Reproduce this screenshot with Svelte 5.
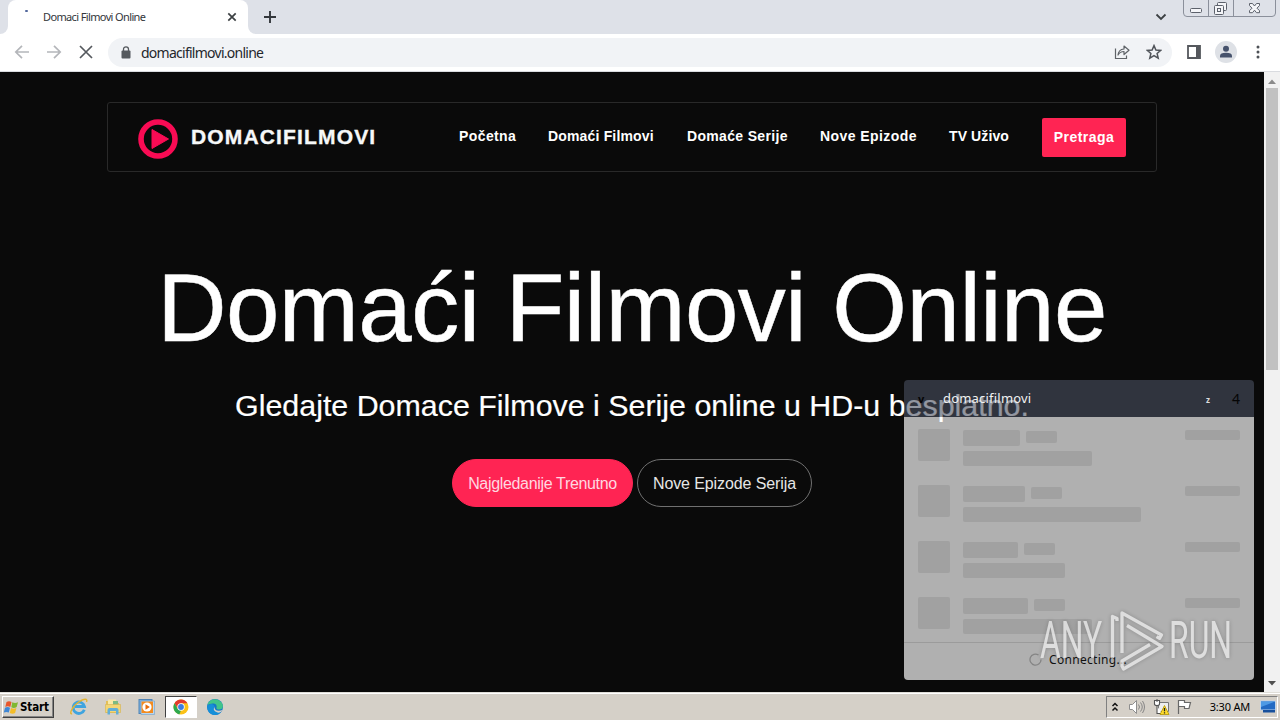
<script>
  const links = [
    { label: 'Početna', w: 57, ls: 0.4 },
    { label: 'Domaći Filmovi', w: 107, ls: 0.17 },
    { label: 'Domaće Serije', w: 101, ls: 0.33 },
    { label: 'Nove Epizode', w: 97, ls: 0.43 },
    { label: 'TV Uživo', w: 61, ls: 0.1 }
  ];
  const rows = [
    { a: 57, b: 31, c: 129 },
    { a: 62, b: 31, c: 178 },
    { a: 55, b: 31, c: 102 },
    { a: 65, b: 31, c: 129 }
  ];
</script>

<div class="screen">
  <header class="tabs">
    <div class="edge"></div>
    <div class="tab">
      <span class="spin"></span>
      <span class="title">Domaci Filmovi Online</span>
      <svg width="10" height="10" viewBox="0 0 10 10"><path d="M1.3 1.3l7.4 7.4M8.7 1.3L1.3 8.7" stroke="#3c4043" stroke-width="1.7" /></svg>
    </div>
    <div class="edge right"></div>
    <svg class="plus" width="14" height="14" viewBox="0 0 14 14"><path d="M7 1v12M1 7h12" stroke="#33373c" stroke-width="1.9" /></svg>
    <svg class="chev" width="12" height="8" viewBox="0 0 12 8"><path d="M1.5 1.5L6 6l4.500-4.500" fill="none" stroke="#3c4043" stroke-width="1.8" /></svg>
    <svg class="winctl" width="94" height="18" viewBox="0 0 94 18">
      <path d="M.5 0v13q0 3.500 3.500 3.500h85q3.500 0 3.500-3.500V0M25.500 0v16M50.500 0v16" fill="none" stroke="#8b909b" />
      <g fill="#f4f5f8" stroke="#5c616b">
        <rect x="7.500" y="8.500" width="11" height="4" rx="1" />
        <rect x="34.500" y="2.500" width="9" height="8" rx="1" />
        <rect x="31.500" y="5.500" width="9" height="9" rx="1" />
        <rect x="34.500" y="8.500" width="3" height="3" />
        <path d="M66.500 3.500h3l2 2.500 2-2.500h3v2L74 8.200l2.500 2.500v2h-3l-2-2.500-2 2.500h-3v-2L69 8.200l-2.500-2.700z" />
      </g>
    </svg>
  </header>

  <div class="toolbar">
    <svg width="16" height="16" viewBox="0 0 16 16"><path d="M15 8H2M8 1.800L1.800 8 8 14.200" fill="none" stroke="#b4b6ba" stroke-width="1.700" /></svg>
    <svg width="16" height="16" viewBox="0 0 16 16"><path d="M1 8h13M8 1.800L14.200 8 8 14.200" fill="none" stroke="#b4b6ba" stroke-width="1.700" /></svg>
    <svg width="16" height="16" viewBox="0 0 16 16"><path d="M2 2l12 12M14 2L2 14" stroke="#55595e" stroke-width="1.700" /></svg>
    <div class="omni">
      <svg width="10" height="13" viewBox="0 0 10 13"><rect x=".5" y="4.500" width="9" height="8" rx="1" fill="#55595e" /><path d="M2.500 5V3.300a2.500 2.500 0 0 1 5 0V5" fill="none" stroke="#55595e" stroke-width="1.300" /></svg>
      <span class="url">domacifilmovi.online</span>
      <svg class="share" width="16" height="16" viewBox="0 0 16 16"><path d="M1.500 4.500v10h11v-3" fill="none" stroke="#5f6368" stroke-width="1.200" /><path d="M4 11q.5-5.500 6-6V2l5 4.200-5 4.300v-3Q6 7.500 4 11z" fill="none" stroke="#5f6368" stroke-width="1.200" stroke-linejoin="round" /></svg>
      <svg width="16" height="16" viewBox="0 0 16 16"><path d="M8 1.600l1.900 4.400 4.800.4-3.600 3.100 1.100 4.700L8 11.700l-4.200 2.500 1.100-4.700L1.300 6.400l4.800-.4z" fill="none" stroke="#50545a" stroke-width="1.500" /></svg>
    </div>
    <svg class="side" width="14" height="14" viewBox="0 0 14 14"><path d="M1 1h12v12H1z" fill="#fff" stroke="#55585d" stroke-width="1.800" /><path d="M9 1h4v12H9z" fill="#55585d" /></svg>
    <svg class="avatar" width="22" height="22" viewBox="0 0 22 22"><circle cx="11" cy="11" r="11" fill="#dee1e6" /><circle cx="11" cy="7.800" r="3" fill="#46526c" /><path d="M5 16.500v-1.700q0-3 6-3t6 3v1.700z" fill="#46526c" /></svg>
    <svg class="dots" width="4" height="14" viewBox="0 0 4 14" fill="#4d5156"><circle cx="2" cy="2" r="1.500" /><circle cx="2" cy="7" r="1.500" /><circle cx="2" cy="12" r="1.500" /></svg>
  </div>

  <div class="view">
    <main>
      <nav>
        <svg class="logo" width="42" height="42" viewBox="0 0 42 42"><circle cx="21" cy="21" r="17" fill="none" stroke="#f90b54" stroke-width="5.600" /><path d="M15 11.500v19L31.500 21z" fill="#f90b54" stroke="#f90b54" stroke-linejoin="round" /></svg>
        <span class="brand">DOMACIFILMOVI</span>
        <div class="links">
          {#each links as l}<span class="link" style="width:{l.w}px;letter-spacing:{l.ls}px">{l.label}</span>{/each}
        </div>
        <span class="search">Pretraga</span>
      </nav>
      <h1>Domaći Filmovi Online</h1>
      <h2>Gledajte Domace Filmove i Serije online u HD-u besplatno.</h2>
      <div class="cta">
        <span class="btn hot">Najgledanije Trenutno</span>
        <span class="btn line">Nove Epizode Serija</span>
      </div>
    </main>
    <div class="scroll">
      <svg width="8" height="5" viewBox="0 0 8 5"><path d="M0 5l4-4.500L8 5z" fill="#8a8a8a" /></svg>
      <div class="thumb"></div>
      <svg class="down" width="8" height="5" viewBox="0 0 8 5"><path d="M0 0l4 4.500L8 0z" fill="#505050" /></svg>
    </div>
  </div>

  <footer>
    <div class="start">
      <svg width="17" height="15" viewBox="0 0 17 15"><path d="M3.500 2q2.500-1.500 5 0L7.300 7q-2.500-1.400-5 0z" fill="#e8562a" /><path d="M9.300 2.300q2.700 1.500 5.700 0L13.700 7q-2.700 1.700-5.400.3z" fill="#80b832" /><path d="M2 7.800q2.500-1.400 5 0L5.800 12.600q-2.300-1.300-5 0z" fill="#3f87d5" /><path d="M8 8.100q2.700 1.400 5.400 0l-1.300 4.800q-2.500 1.500-5.300 0z" fill="#f4bd28" /></svg>
      <span>Start</span>
    </div>
    <div class="quick">
      <svg width="18" height="18" viewBox="0 0 18 18"><path d="M14.300 11.700A5.700 5.700 0 1 1 14.500 8.500H5" fill="none" stroke="#3fa4df" stroke-width="2.800" /><path d="M2 15.500C-1 17 1.500 9 8 4.500S18 .5 16.500 4" fill="none" stroke="#e3b431" stroke-width="1.400" /></svg>
      <svg width="18" height="18" viewBox="0 0 18 18"><path d="M2 3h5l1 2h7v10H2z" fill="#e3bf58" /><path d="M4 1.500h8V8H4z" fill="#f9e9a6" /><path d="M9 3h5v4H9z" fill="#7dba82" /><path d="M1.500 6.500h15v8h-15z" fill="#f3d676" stroke="#d5b350" stroke-width=".6" /><path d="M3.500 16.500V12q0-2 2-2h7q2 0 2 2v4.500H12V13H6v3.500z" fill="#63aed6" /></svg>
      <svg width="18" height="18" viewBox="0 0 18 18"><rect x="1" y="1.500" width="13" height="14" fill="#78aede" stroke="#4f83b5" /><path d="M3 3h13.500v13.500H3z" fill="#b9d6ef" stroke="#6f9fca" stroke-width=".6" /><rect x="3.500" y="3.500" width="11.500" height="11.500" fill="#f28b20" /><circle cx="9" cy="9" r="4.600" fill="#fff" /><path d="M7.500 6.200v5.600l4.400-2.800z" fill="#e86c0a" /></svg>
      <div class="active">
        <svg width="16" height="16" viewBox="0 0 16 16"><circle cx="8" cy="8" r="7.500" fill="#fbc116" /><path d="M1.500 4.200A7.500 7.500 0 0 1 14.500 4.300H8L5 9.800z" fill="#e33b2e" /><path d="M1.500 4.200L4.800 10 8 11.500l-1.700 3.900A7.500 7.500 0 0 1 1.500 4.200z" fill="#2da94f" /><circle cx="8" cy="8" r="3.700" fill="#fff" /><circle cx="8" cy="8" r="2.900" fill="#3d7de0" /></svg>
      </div>
      <svg width="18" height="18" viewBox="0 0 18 18"><circle cx="9" cy="9" r="8" fill="#1576c8" /><path d="M1.500 7C3 0 13-1 16.500 6q1.500 5-3 5.500-3.500 0-3-2 1-3-2.500-4-4-.5-6.500 1.500z" fill="#41c48a" /><path d="M1.200 8Q6 4 8.500 8q-2 5 3 6 2 .3 4-.8Q12 18 7 16.800 1 15 1.200 8z" fill="#168fd8" /><path d="M8.800 8.500q-1 4 4 4.300 2 0 4-1-2 3.500-5.300 2.700-5.500-1.500-2.700-6z" fill="#d6cfc7" /></svg>
    </div>
    <div class="tray">
      <svg width="8" height="11" viewBox="0 0 8 11"><path d="M1.500 4L4 1.500 6.500 4M1.500 8.500L4 6l2.500 2.500" fill="none" stroke="#111" stroke-width="1.500" /></svg>
      <svg class="vol" width="17" height="16" viewBox="0 0 17 16"><path d="M1.500 5.500h3l4-4v13l-4-4h-3z" fill="#fff" stroke="#8e8e8e" /><path d="M10.500 5.500q2 2.500 0 5M12.500 3.500q3.500 4.500 0 9M14.500 2q4 6 0 12" fill="none" stroke="#858585" /></svg>
      <svg width="17" height="17" viewBox="0 0 17 17"><path d="M5.500 3.500h10v9h-10z" fill="#eee" stroke="#777" /><path d="M1.500 1.500h5V5q0 1.500-2.500 1.500T1.500 5zM4 7v7.500h5" fill="#fff" stroke="#555" stroke-width="1.100" /><path d="M4 0v3" stroke="#555" /><path d="M11.500 6.500l4.500 9H7z" fill="#ffdc2a" stroke="#b39400" stroke-width=".8" /><path d="M11.500 9v3.300M11.500 13.300v1.300" stroke="#222" stroke-width="1.300" /></svg>
      <svg class="flag" width="17" height="16" viewBox="0 0 17 16"><path d="M2.500 15V1.500h6v2h6L13 9.500H8.500v-2h-6" fill="#fff" stroke="#686868" stroke-width="1.200" /></svg>
      <span class="time">3:30 AM</span>
      <svg width="16" height="14" viewBox="0 0 16 14"><path d="M.5 1h15v9H.5z" fill="#226ac3" stroke="#bcd3ea" /><path d="M1 1.500h14L1 7z" fill="#4d9ae5" /><path d="M3 10h12v2.500H3z" fill="#17509c" /></svg>
    </div>
  </footer>

  <aside>
    <div class="phead">
      <span class="glyph">v</span>
      <span class="who">domacifilmovi</span>
      <span class="z">z</span>
      <span class="four">4</span>
    </div>
    <div class="pbody">
      {#each rows as r}
        <div class="row">
          <i class="pic"></i>
          <div class="lines">
            <div class="top"><i class="a" style="width:{r.a}px"></i><i class="b" style="width:{r.b}px"></i></div>
            <i class="c" style="width:{r.c}px"></i>
          </div>
          <i class="d"></i>
        </div>
      {/each}
      <div class="conn">
        <svg width="13" height="13" viewBox="0 0 13 13"><path d="M9.500 2A5.500 5.500 0 1 0 12 6.500" fill="none" stroke="#858585" stroke-width="1.300" /></svg>
        <span>Connecting...</span>
      </div>
    </div>
  </aside>

  <div class="mark">
    <span class="mk any">ANY</span>
    <svg width="57" height="64" viewBox="0 0 57 64">
      <g fill="none" stroke-width="3.300" stroke-linejoin="round">
        <path d="M9 12V9.500L4.500 7.500V49" />
        <path d="M14 44V4L53.500 26l-2 3.300-3-1.700" />
        <path d="M19 16.500l35 21L15.500 60l-1.500-3v-5l28-16.500" />
      </g>
    </svg>
    <span class="mk run">RUN</span>
  </div>
</div>

<style>
  :global(body) { margin: 0; overflow: hidden; }
  .screen { position: relative; width: 1280px; height: 720px; overflow: hidden; display: flex; flex-direction: column; font-family: "Noto Sans", sans-serif; background: #0a0a0a; }
  svg { display: block; flex: none; }
  span { white-space: nowrap; }
  .tabs { height: 34px; background: #dee1e8; display: flex; align-items: flex-start; flex: none; }
  .edge { width: 8px; height: 34px; background: #fff; flex: none; }
  .edge::before { content: ""; display: block; height: 34px; background: #dee1e8; border-bottom-right-radius: 8px; }
  .right::before { border-radius: 0 0 0 8px; }
  .tab { box-sizing: border-box; width: 240px; height: 34px; background: #fff; border-radius: 8px 8px 0 0; display: flex; align-items: center; padding: 0 11px 0 17px; }
  .spin { width: 3px; height: 2px; border-radius: 2px; background: #52679c; margin: -12px 15px 0 0; }
  .title { font-size: 11px; letter-spacing: -.63px; color: #33363a; flex: 1; margin-top: -2px; }
  .plus { margin: 10px auto 0 7px; }
  .chev { margin: 13px 16px 0 0; }
  .winctl { margin-right: 3px; }
  .toolbar { box-sizing: border-box; height: 38px; flex: none; background: #fff; border-bottom: 1px solid #d9dbdf; display: flex; align-items: center; padding: 0 20px 1px 14px; gap: 16px; }
  .omni { box-sizing: border-box; height: 29px; width: 1064px; background: #f1f3f6; border-radius: 15px; display: flex; align-items: center; padding: 0 10px 0 13px; margin-left: -2px; }
  .url { font-size: 14px; color: #24272b; margin-left: 10px; flex: 1; letter-spacing: -.74px; }
  .share { margin-right: 16px; }
  .side { margin-left: -1px; }
  .avatar { margin-left: -2px; }
  .dots { margin-left: 3px; }
  .view { height: 620px; flex: none; display: flex; font-family: "Liberation Sans", Arial, sans-serif; color: #fff; }
  main { width: 1264px; display: flex; flex-direction: column; align-items: center; }
  nav { box-sizing: border-box; width: 1050px; height: 70px; margin-top: 30px; border: 1px solid #292929; border-radius: 3px; display: flex; align-items: center; padding: 0 30px; flex: none; }
  .logo { margin: 4px 0 0 -1px; }
  .brand { font-weight: 700; font-size: 21px; letter-spacing: 1.15px; margin: -1px 0 0 12px; width: 268px; color: #f6f8f8; -webkit-text-stroke: .35px #f6f8f8; }
  .links { display: flex; gap: 32px; margin-right: 32px; font-size: 14px; font-weight: 700; padding-bottom: 2px; }
  .search { width: 84px; height: 39px; line-height: 39px; background: #ff2453; border-radius: 2px; text-align: center; font-size: 14px; font-weight: 700; letter-spacing: .45px; }
  h1 { margin: 81px 0 0; font-size: 96px; line-height: 110px; font-weight: 400; letter-spacing: -.5px; white-space: nowrap; -webkit-text-stroke: .5px #fff; }
  h2 { margin: 24px 0 0; font-size: 30.4px; line-height: 36px; font-weight: 400; white-space: nowrap; -webkit-text-stroke: .2px #fff; }
  .cta { display: flex; gap: 4px; margin-top: 36px; }
  .btn { box-sizing: border-box; height: 48px; line-height: 47px; border: 1px solid #707070; border-radius: 24px; text-align: center; font-size: 16px; color: #e6e6e6; }
  .hot { width: 181px; background: #ff2453; border-color: #ff2453; color: #ffd7e0; letter-spacing: -.33px; }
  .line { width: 175px; letter-spacing: -.1px; }
  .scroll { box-sizing: border-box; width: 16px; background: #f1f1f1; display: flex; flex-direction: column; align-items: center; padding: 7px 0 6px; }
  .thumb { width: 12px; height: 282px; background: #c1c1c1; margin-top: 4px; }
  .down { margin-top: auto; }
  footer { box-sizing: border-box; height: 28px; flex: none; background: #d5d0c8; border-top: 1px solid #e0ded8; box-shadow: inset 0 1px #fff; display: flex; align-items: center; padding: 2px 2px 1px; }
  .start { box-sizing: border-box; width: 52px; height: 22px; border: 1px solid; border-color: #fff #404040 #404040 #fff; box-shadow: inset -1px -1px #858585; display: flex; align-items: center; font: 700 11.500px "DejaVu Sans Condensed", "DejaVu Sans", sans-serif; color: #000; }
  .start span { letter-spacing: -.1px; }
  .quick { display: flex; align-items: center; margin-left: 16px; gap: 16px; }
  .active { box-sizing: border-box; width: 32px; height: 22px; background: #fff; border: 1px solid; border-color: #404040 #fff #fff #404040; display: flex; align-items: center; justify-content: center; margin: 0 -7px; }
  .tray { box-sizing: border-box; width: 172px; height: 22px; margin-left: auto; border: 1px solid; border-color: #808080 #fff #fff #808080; display: flex; align-items: center; padding: 0 1px 0 4px; }
  .vol { margin: 0 8px 0 9px; }
  .flag { margin-left: 6px; }
  .time { margin: -1px 10px 0 auto; font-size: 11px; letter-spacing: -.2px; color: #000; }
  aside { position: absolute; left: 904px; top: 380px; width: 350px; height: 300px; border-radius: 4px; overflow: hidden; }
  .phead { height: 37px; background: rgba(73, 80, 97, .6); display: flex; align-items: center; color: #050505; font-size: 13px; box-sizing: border-box; padding: 0 14px 0 14px; }
  .glyph { width: 25px; font-weight: 700; font-size: 11px; }
  .who { color: #f1f1f1; flex: 1; letter-spacing: .2px; margin-top: -2px; }
  .z { font-size: 8px; font-weight: 700; color: #ddd; margin: 2px 22px 0 0; }
  .four { font-size: 14px; }
  .pbody { box-sizing: border-box; height: 263px; background: rgba(255, 255, 255, .68); padding-top: 12px; display: flex; flex-direction: column; }
  .row { box-sizing: border-box; height: 56px; flex: none; display: flex; align-items: flex-start; padding: 0 14px; }
  .row i { background: #a1a1a1; border-radius: 2px; display: block; }
  .row .pic { width: 32px; height: 32px; }
  .lines { margin: 1px auto 0 13px; }
  .top { display: flex; gap: 6px; }
  .row .a { height: 16px; }
  .row .b { height: 12px; margin-top: 1px; }
  .row .c { height: 15px; margin-top: 5px; }
  .row .d { width: 55px; height: 10px; margin-top: 1px; }
  .conn { margin-top: -11px; border-top: 1px solid #9b9b9b; flex: 1; display: flex; align-items: center; justify-content: center; gap: 7px; padding: 0 2px 4px 0; font-size: 12px; letter-spacing: .3px; color: #111; }
  .mark { position: absolute; left: 1040px; top: 609px; width: 192px; height: 64px; display: flex; align-items: center; opacity: .72; color: #f0f0f0; font: 400 51px/66px Roboto, sans-serif; filter: drop-shadow(0 0 2px rgba(80, 80, 80, .55)); }
  .mark svg { stroke: #f0f0f0; margin: 0 4px 0 5px; }
  .mk { width: 63px; display: block; transform-origin: 0 50%; transform: scaleX(.625); }
  .run { width: 60px; }
</style>
